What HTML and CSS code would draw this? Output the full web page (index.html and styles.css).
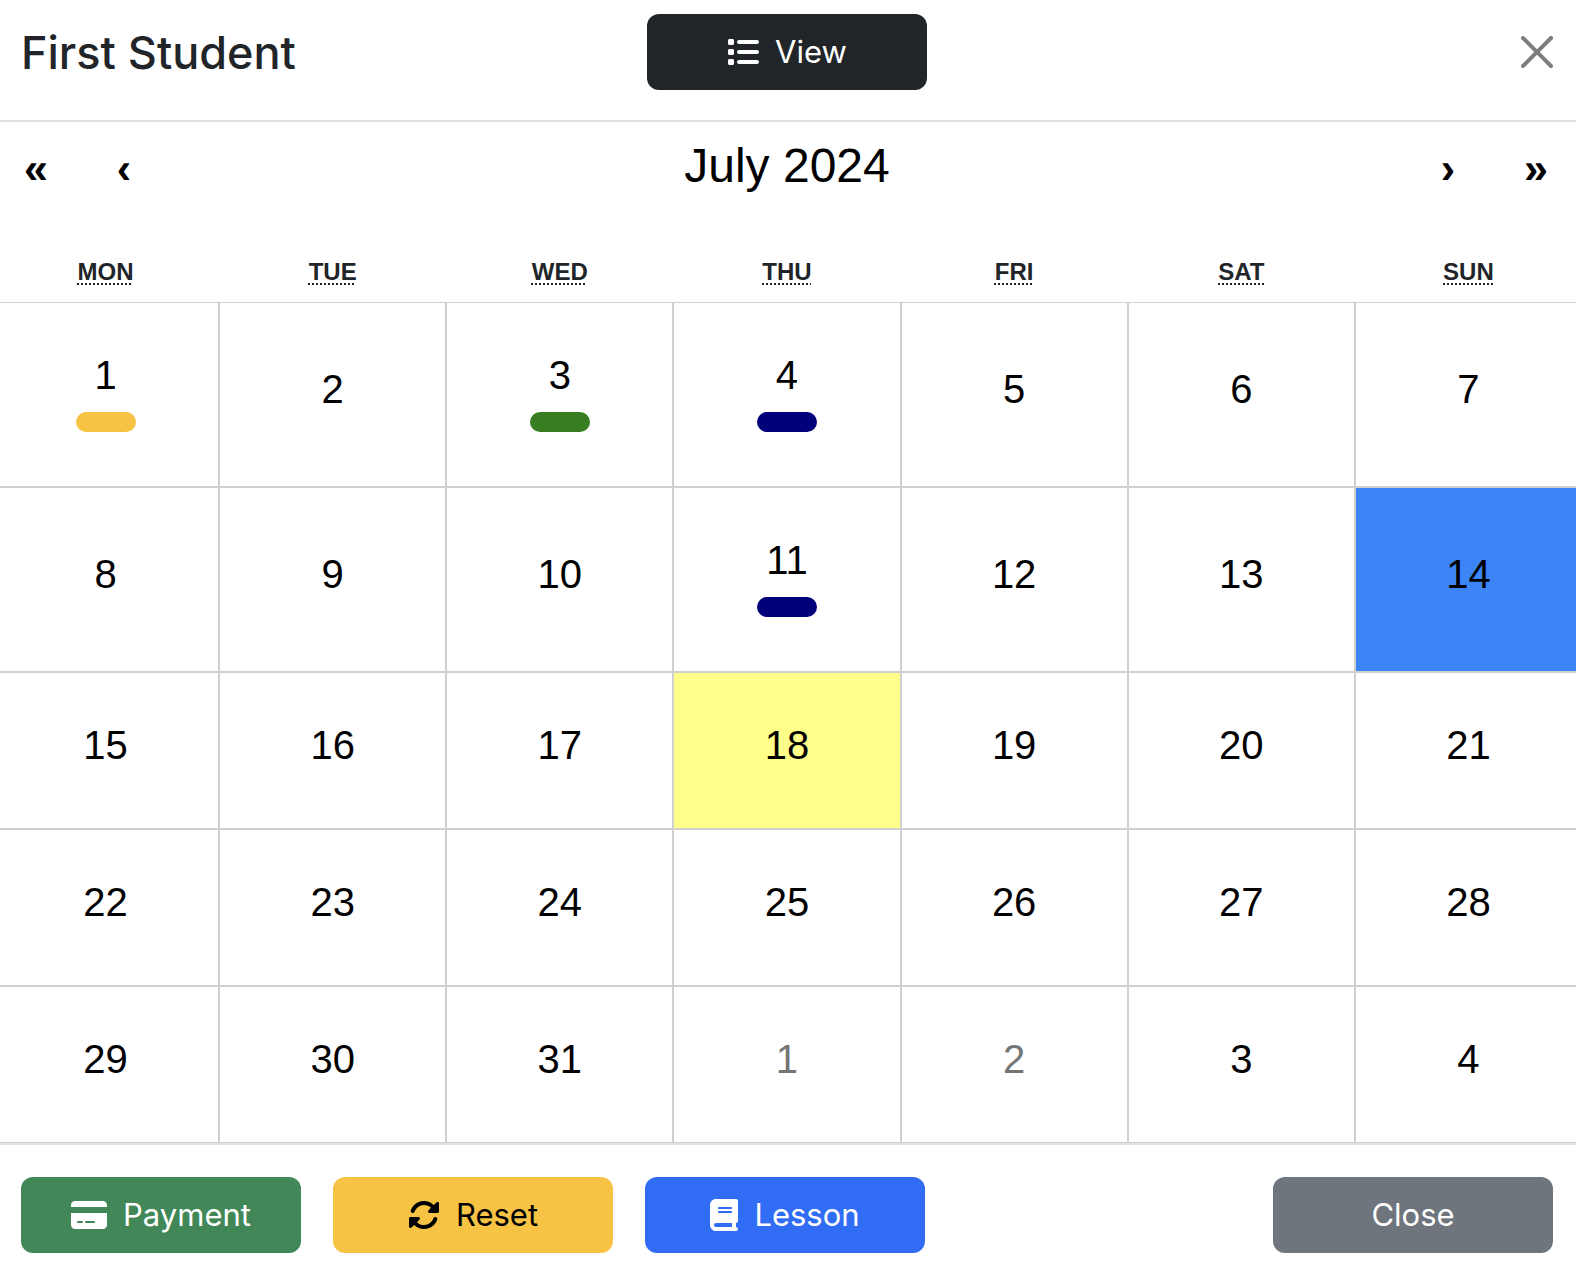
FILE: index.html
```html
<!DOCTYPE html>
<html lang="en">
<head>
<meta charset="utf-8">
<meta name="viewport" content="width=device-width, initial-scale=1">
<title>First Student</title>
<link rel="stylesheet" href="styles.css">
</head>
<body>
<main class="modal">
  <header class="modal-header">
    <h1 class="modal-title">First Student</h1>
    <button type="button" class="btn btn-dark">
      <svg class="icon" viewBox="0 0 512 512" width="32" height="32" aria-hidden="true"><path d="M40 48C26.7 48 16 58.7 16 72v48c0 13.300 10.700 24 24 24H88c13.300 0 24-10.700 24-24V72c0-13.300-10.700-24-24-24H40zM192 64c-17.700 0-32 14.300-32 32s14.300 32 32 32H480c17.700 0 32-14.300 32-32s-14.300-32-32-32H192zm0 160c-17.700 0-32 14.300-32 32s14.300 32 32 32H480c17.700 0 32-14.300 32-32s-14.300-32-32-32H192zm0 160c-17.700 0-32 14.300-32 32s14.300 32 32 32H480c17.700 0 32-14.300 32-32s-14.300-32-32-32H192zM16 232v48c0 13.300 10.700 24 24 24H88c13.300 0 24-10.700 24-24V232c0-13.300-10.700-24-24-24H40c-13.300 0-24 10.700-24 24zM40 368c-13.300 0-24 10.700-24 24v48c0 13.300 10.700 24 24 24H88c13.300 0 24-10.700 24-24V392c0-13.300-10.700-24-24-24H40z"/></svg>
      View
    </button>
    <button type="button" class="btn-close" aria-label="Close">
      <svg viewBox="0 0 16 16" width="32" height="32" aria-hidden="true"><path d="M.293.293a1 1 0 0 1 1.414 0L8 6.586 14.293.293a1 1 0 1 1 1.414 1.414L9.414 8l6.293 6.293a1 1 0 0 1-1.414 1.414L8 9.414l-6.293 6.293a1 1 0 0 1-1.414-1.414L6.586 8 .293 1.707a1 1 0 0 1 0-1.414z"/></svg>
    </button>
  </header>

  <section class="calendar">
    <nav class="calendar-nav">
      <button type="button" class="nav-arrow" aria-label="Previous year">«</button>
      <button type="button" class="nav-arrow" aria-label="Previous month">‹</button>
      <button type="button" class="nav-label">July 2024</button>
      <button type="button" class="nav-arrow" aria-label="Next month">›</button>
      <button type="button" class="nav-arrow" aria-label="Next year">»</button>
    </nav>
    <table class="month">
      <thead>
        <tr>
          <th scope="col"><abbr title="Monday">MON</abbr></th>
          <th scope="col"><abbr title="Tuesday">TUE</abbr></th>
          <th scope="col"><abbr title="Wednesday">WED</abbr></th>
          <th scope="col"><abbr title="Thursday">THU</abbr></th>
          <th scope="col"><abbr title="Friday">FRI</abbr></th>
          <th scope="col"><abbr title="Saturday">SAT</abbr></th>
          <th scope="col"><abbr title="Sunday">SUN</abbr></th>
        </tr>
      </thead>
      <tbody>
        <tr>
          <td><button type="button" class="day">1<span class="mark mark-yellow"></span></button></td>
          <td><button type="button" class="day">2</button></td>
          <td><button type="button" class="day">3<span class="mark mark-green"></span></button></td>
          <td><button type="button" class="day">4<span class="mark mark-navy"></span></button></td>
          <td><button type="button" class="day">5</button></td>
          <td><button type="button" class="day">6</button></td>
          <td><button type="button" class="day">7</button></td>
        </tr>
        <tr>
          <td><button type="button" class="day">8</button></td>
          <td><button type="button" class="day">9</button></td>
          <td><button type="button" class="day">10</button></td>
          <td><button type="button" class="day">11<span class="mark mark-navy"></span></button></td>
          <td><button type="button" class="day">12</button></td>
          <td><button type="button" class="day">13</button></td>
          <td class="selected"><button type="button" class="day">14</button></td>
        </tr>
        <tr>
          <td><button type="button" class="day">15</button></td>
          <td><button type="button" class="day">16</button></td>
          <td><button type="button" class="day">17</button></td>
          <td class="today"><button type="button" class="day">18</button></td>
          <td><button type="button" class="day">19</button></td>
          <td><button type="button" class="day">20</button></td>
          <td><button type="button" class="day">21</button></td>
        </tr>
        <tr>
          <td><button type="button" class="day">22</button></td>
          <td><button type="button" class="day">23</button></td>
          <td><button type="button" class="day">24</button></td>
          <td><button type="button" class="day">25</button></td>
          <td><button type="button" class="day">26</button></td>
          <td><button type="button" class="day">27</button></td>
          <td><button type="button" class="day">28</button></td>
        </tr>
        <tr>
          <td><button type="button" class="day">29</button></td>
          <td><button type="button" class="day">30</button></td>
          <td><button type="button" class="day">31</button></td>
          <td><button type="button" class="day day-outside">1</button></td>
          <td><button type="button" class="day day-outside">2</button></td>
          <td><button type="button" class="day">3</button></td>
          <td><button type="button" class="day">4</button></td>
        </tr>
      </tbody>
    </table>
  </section>

  <footer class="modal-footer">
    <button type="button" class="btn btn-success">
      <svg class="icon" viewBox="0 0 576 512" width="36" height="32" aria-hidden="true"><path d="M64 32C28.700 32 0 60.700 0 96v32H576V96c0-35.300-28.700-64-64-64H64zM576 224H0V416c0 35.300 28.700 64 64 64H512c35.300 0 64-28.700 64-64V224zM112 352h64c8.800 0 16 7.200 16 16s-7.200 16-16 16H112c-8.800 0-16-7.200-16-16s7.200-16 16-16zm112 16c0-8.800 7.200-16 16-16H368c8.800 0 16 7.200 16 16s-7.200 16-16 16H240c-8.800 0-16-7.200-16-16z"/></svg>
      Payment
    </button>
    <button type="button" class="btn btn-warning">
      <svg class="icon" viewBox="0 0 512 512" width="32" height="32" aria-hidden="true"><path d="M142.900 142.900c62.200-62.200 162.700-62.500 225.300-1L327 183c-6.900 6.900-8.900 17.200-5.200 26.200s12.500 14.800 22.200 14.800H472c13.300 0 24-10.700 24-24V72c0-9.700-5.800-18.500-14.800-22.200s-19.300-1.700-26.200 5.200L413.400 96.600c-87.600-86.500-228.700-86.200-315.800 1C73.200 122 55.600 150.700 44.800 181.400c-5.900 16.700 2.900 34.900 19.500 40.800s34.900-2.900 40.800-19.500c7.700-21.800 20.200-42.300 37.800-59.800zM16 312V440c0 9.700 5.800 18.500 14.800 22.200s19.300 1.700 26.200-5.200l41.600-41.600c87.600 86.500 228.700 86.200 315.800-1c24.400-24.400 42.100-53.100 52.900-83.700c5.900-16.700-2.900-34.900-19.500-40.800s-34.900 2.900-40.800 19.500c-7.700 21.800-20.200 42.300-37.800 59.800c-62.200 62.200-162.700 62.500-225.300 1L185 329c6.900-6.900 8.900-17.200 5.200-26.200s-12.500-14.800-22.200-14.800H40c-13.300 0-24 10.700-24 24z"/></svg>
      Reset
    </button>
    <button type="button" class="btn btn-primary">
      <svg class="icon" viewBox="0 0 448 512" width="28" height="32" aria-hidden="true"><path d="M96 0C43 0 0 43 0 96V416c0 53 43 96 96 96H384h32c17.700 0 32-14.300 32-32s-14.300-32-32-32V384c17.700 0 32-14.300 32-32V32c0-17.700-14.300-32-32-32H384 96zm0 384H352v64H96c-17.700 0-32-14.300-32-32s14.300-32 32-32zm32-240c0-8.800 7.200-16 16-16H336c8.800 0 16 7.200 16 16s-7.200 16-16 16H144c-8.800 0-16-7.200-16-16zm16 48H336c8.800 0 16 7.200 16 16s-7.200 16-16 16H144c-8.800 0-16-7.200-16-16s7.200-16 16-16z"/></svg>
      Lesson
    </button>
    <button type="button" class="btn btn-secondary">Close</button>
  </footer>
</main>
</body>
</html>
```
FILE: styles.css
```css
* {
  box-sizing: border-box;
}

body {
  margin: 0;
  background: #fff;
  color: #212529;
  font-family: Inter, sans-serif;
}

button {
  margin: 0;
  padding: 0;
  border: 0;
  background: none;
  color: #000;
  font-family: inherit;
  cursor: pointer;
}

.modal {
  overflow: hidden;
}

.modal-header {
  display: grid;
  grid-template-columns: 1fr auto 1fr;
  align-items: center;
  padding: 14px 23px 30px 21px;
  border-bottom: 2px solid #dee2e6;
}

.modal-title {
  margin: 0;
  padding-top: 2px;
  font-size: 45px;
  font-weight: 500;
  line-height: 74px;
}

.btn {
  display: flex;
  align-items: center;
  justify-content: center;
  gap: 16px;
  width: 280px;
  height: 76px;
  border-radius: 12px;
  color: #fff;
  font-size: 31px;
  line-height: 48px;
}

.icon {
  flex: none;
  fill: currentColor;
}

.btn-dark {
  background: #212529;
}

.btn-success {
  background: #418758;
}

.btn-warning {
  background: #f6c344;
  color: #000;
}

.btn-primary {
  background: #316cf4;
}

.btn-secondary {
  margin-left: auto;
  background: #6e757c;
}

.btn-close {
  display: flex;
  justify-self: end;
  opacity: 0.5;
}

/* The calendar bleeds past both edges so its outer borders stay hidden. */
.calendar {
  margin: 0 -7px;
  font-family: "Liberation Sans", Arial, sans-serif;
}

.calendar-nav {
  display: flex;
  height: 88px;
  margin: 0 2px 16px 0;
}

.nav-arrow {
  width: 88px;
  padding: 5px 2px 0 0;
  font-size: 43px;
  font-weight: 700;
}

.nav-label {
  flex: 1;
  padding-bottom: 2px;
  font-size: 48px;
}

.month {
  width: 100%;
  table-layout: fixed;
  border-collapse: separate;
  border-spacing: 0;
}

.month th {
  height: 77px;
  padding: 28px 2px 12px 0;
  border-bottom: 1px solid #d0d0d0;
  font-size: 24px;
  line-height: 36px;
}

.month abbr {
  text-decoration: underline dotted 2px;
  text-underline-offset: 3px;
  text-decoration-skip-ink: none;
}

.month td {
  padding: 0;
  border-right: 2px solid #d0d0d0;
  border-bottom: 2px solid #d0d0d0;
}

.month tbody tr:last-child td {
  border-bottom-width: 1px;
}

.day {
  display: flex;
  flex-direction: column;
  align-items: center;
  width: 100%;
  padding: 48px 0 59px;
  font-size: 40px;
  line-height: 48px;
}

.day:has(.mark) {
  padding-bottom: 54px;
}

.day-outside {
  color: #757575;
}

.today {
  background: #ffff8a;
}

.selected {
  background: #3d84f7;
}

.mark {
  width: 60px;
  height: 20px;
  margin-top: 13px;
  border-radius: 10px;
}

.mark-yellow {
  background: #f6c344;
}

.mark-green {
  background: #377d22;
}

.mark-navy {
  background: #00007b;
}

.modal-footer {
  display: flex;
  gap: 32px;
  padding: 32px 23px 21px 21px;
  border-top: 2px solid #dee2e6;
}
```
